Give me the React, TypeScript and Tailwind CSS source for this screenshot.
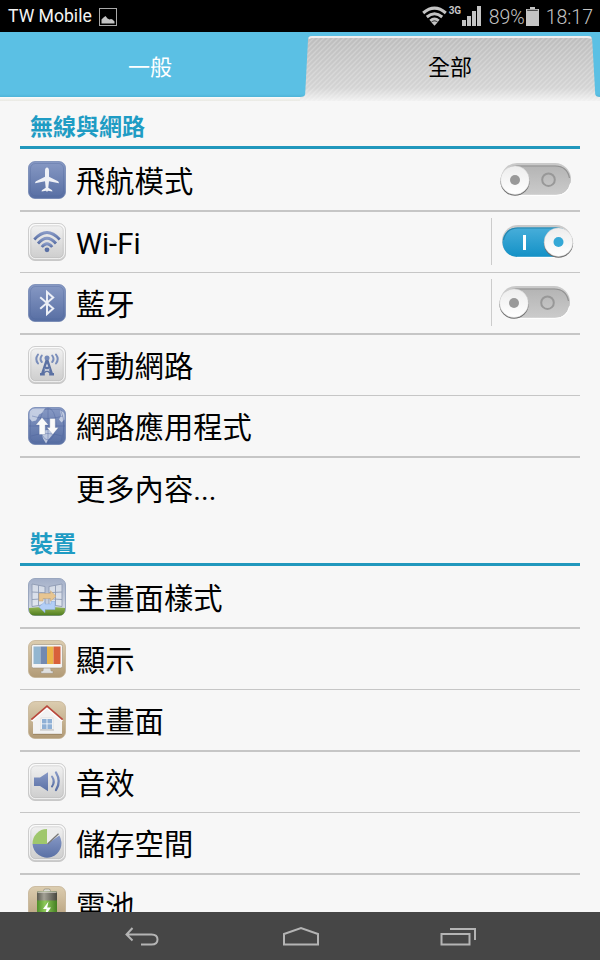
import React, { useState } from 'react';

type SwitchState = 'on' | 'off';

interface SettingItem {
  id: string;
  label: string;
  icon?: React.ReactNode;
  toggle?: boolean;
  divided?: boolean;
}

interface TileProps {
  tone: 'blue' | 'silver' | 'tan';
  children: React.ReactNode;
}

const fontStack = "font-['Roboto','Noto_Sans_CJK_TC',sans-serif]";

// Shared gradients, referenced by every icon below
const Gradients = () => (
  <svg width="0" height="0" className="absolute" aria-hidden="true">
    <defs>
      <linearGradient id="tile-blue" x1="0" y1="0" x2="0" y2="1">
        <stop offset="0" stopColor="#8799c4" />
        <stop offset="1" stopColor="#576ea3" />
      </linearGradient>
      <linearGradient id="tile-silver" x1="0" y1="0" x2="0" y2="1">
        <stop offset="0" stopColor="#f3f3f3" />
        <stop offset="1" stopColor="#cbcbcb" />
      </linearGradient>
      <linearGradient id="tile-tan" x1="0" y1="0" x2="0" y2="1">
        <stop offset="0" stopColor="#dccdb0" />
        <stop offset="1" stopColor="#b19a76" />
      </linearGradient>
      <linearGradient id="glyph-blue" x1="0" y1="0" x2="0" y2="1">
        <stop offset="0" stopColor="#8698c5" />
        <stop offset="1" stopColor="#5a70a5" />
      </linearGradient>
      <linearGradient id="sky" x1="0" y1="0" x2="0" y2="1">
        <stop offset="0" stopColor="#a3afc8" />
        <stop offset="1" stopColor="#dce1ea" />
      </linearGradient>
      <linearGradient id="grass" x1="0" y1="0" x2="0" y2="1">
        <stop offset="0" stopColor="#94b552" />
        <stop offset="1" stopColor="#4f7d1f" />
      </linearGradient>
      <linearGradient id="cell" x1="0" y1="0" x2="1" y2="0">
        <stop offset="0" stopColor="#4f8f2a" />
        <stop offset="0.4" stopColor="#8fc95a" />
        <stop offset="1" stopColor="#437f22" />
      </linearGradient>
      <linearGradient id="cell-cap" x1="0" y1="0" x2="1" y2="0">
        <stop offset="0" stopColor="#5a594f" />
        <stop offset="0.35" stopColor="#a3a195" />
        <stop offset="1" stopColor="#48473f" />
      </linearGradient>
      <linearGradient id="track-off" x1="0" y1="0" x2="0" y2="1">
        <stop offset="0" stopColor="#b4b4b4" />
        <stop offset="1" stopColor="#cbcbcb" />
      </linearGradient>
      <linearGradient id="track-on" x1="0" y1="0" x2="0" y2="1">
        <stop offset="0" stopColor="#48aeda" />
        <stop offset="1" stopColor="#1391c6" />
      </linearGradient>
      <linearGradient id="knob" x1="0" y1="0" x2="0" y2="1">
        <stop offset="0" stopColor="#ededed" />
        <stop offset="1" stopColor="#ffffff" />
      </linearGradient>
    </defs>
  </svg>
);

const tileFill = {
  blue: 'url(#tile-blue)',
  silver: 'url(#tile-silver)',
  tan: 'url(#tile-tan)',
};

const tileEdge = {
  blue: '#6a7fae',
  silver: '#bdbdbd',
  tan: '#c0ae8e',
};

const Tile = ({ tone, children }: TileProps) => (
  <svg width="38" height="38" viewBox="0 0 38 38" className="block shrink-0">
    <rect x="0.5" y="0.5" width="37" height="37" rx="6.5" fill={tileFill[tone]} stroke={tileEdge[tone]} strokeOpacity="0.7" />
    {tone === 'blue' && (
      <rect x="2.5" y="2.5" width="33" height="32.5" rx="5" fill="none" stroke="#50669a" strokeOpacity="0.45" strokeWidth="0.7" />
    )}
    {tone === 'silver' && (
      <>
        <rect x="1.7" y="1.700" width="34.600" height="33.800" rx="5.5" fill="none" stroke="#fff" strokeOpacity="0.8" />
        <rect x="2.8" y="2.800" width="32.400" height="32" rx="4.8" fill="none" stroke="#a9a9a9" strokeOpacity="0.45" strokeWidth="0.7" />
      </>
    )}
    {children}
  </svg>
);

const AirplaneIcon = () => (
  <Tile tone="blue">
    <path
      d="M19 6.500c-1.400 0-2 1.600-2 3.400v5.800L8 20.200c-.6.400-.9 1-.9 2l9.900-2 .7 6.600-3.500 2.200c-.4.300-.6.800-.6 1.500l4.500-.8.900 1.200.9-1.200 4.500.8c0-.7-.2-1.200-.6-1.500l-3.500-2.200.7-6.600 9.900 2c0-1-.3-1.600-.9-2L21 15.700V9.900c0-1.800-.6-3.400-2-3.400z"
      fill="#eff1f6"
    />
  </Tile>
);

const WifiTileIcon = () => (
  <Tile tone="silver">
    <g fill="none" stroke="url(#glyph-blue)" strokeWidth="2.800">
      <path d="M6.300 16.500Q19 2.500 31.700 16.500" />
      <path d="M10 20.500Q19 10 28 20.500" />
      <path d="M13.800 24Q19 17.500 24.200 24" />
    </g>
    <circle cx="19" cy="26.800" r="2.400" fill="#5a70a5" />
  </Tile>
);

const BluetoothIcon = () => (
  <Tile tone="blue">
    <path d="M12.200 13.200l13 11.300-6.200 5.500V8l6.200 5.500-13 11.300" fill="none" stroke="#eceff6" strokeWidth="2" />
  </Tile>
);

const AntennaIcon = () => (
  <Tile tone="silver">
    <g fill="none" stroke="#7a8ebb" strokeWidth="2" strokeLinecap="round">
      <path d="M13.800 9.500q-2.600 3.500 0 6.500M10 8.500q-3.400 4.500 0 9M24.200 9.500q2.600 3.500 0 6.500M28 8.500q3.400 4.500 0 9" />
    </g>
    <circle cx="19" cy="12" r="2.500" fill="#7489b8" />
    <path d="M17.500 14h3l4.300 13H26v2.500h-4.800V27L19 25.800 16.800 27v2.500H12V27h1.200z" fill="#5b71a3" />
    <path d="M19 17.500l1.300 3.300h-2.600z" fill="#dde0e8" />
    <path d="M16.500 23l5 2M21.500 23l-5 2" stroke="#dde0e8" strokeWidth="0.900" />
  </Tile>
);

const GlobeIcon = () => (
  <Tile tone="blue">
    <path d="M1.500 7q0-5.500 6-5.500H17l-2 4-4 2-3 6-4 1-2.500-3zM32 3.500q4.500 1 4.500 5v4l-3 3-2.500-3 2-4zM14 24l8-1.500 4 3-3 4-2.500 3-2.500 4-3-5-1-4z" fill="#d5dceb" fillOpacity="0.800" />
    <g fill="none" stroke="#4a629b" strokeOpacity="0.500" strokeWidth="0.800">
      <ellipse cx="20" cy="17" rx="8" ry="16" />
      <path d="M1 19h36M20 1v36M4 9q16 5 31 0M3 29q16-5 31 0M33 4q6 14 0 30" />
    </g>
    <path d="M14 10.500l6.500 7.500h-3.300v9.500h-6V18H7.800z" fill="#fafafa" stroke="#4c6090" strokeOpacity="0.500" strokeWidth="0.500" />
    <path d="M24.800 27.500l-6-7h3V11.500h5.500v9h3.200z" fill="#fafafa" stroke="#4c6090" strokeOpacity="0.500" strokeWidth="0.500" />
  </Tile>
);

const HomeStyleIcon = () => (
  <svg width="38" height="38" viewBox="0 0 38 38" className="block shrink-0">
    <rect x="0.5" y="0.5" width="37" height="37" rx="6.5" fill="url(#sky)" stroke="#9aa7bf" />
    <path d="M1 30q18-2 36 0v1.500q0 6-6 6H7q-6 0-6-6z" fill="url(#grass)" />
    <g fill="#eef1f6" fillOpacity="0.600" stroke="#8e9bb3" strokeWidth="0.900">
      <path d="M4 6l13 2.500v18L4 28.500zM34 6L21 8.500v18l13 2z" />
      <path d="M10.500 7.200v20M4 14l13 .7M4 21.500l13-.8M27.500 7.200v20M34 14l-13 .7M34 21.500l-13-.8" />
    </g>
    <path d="M11 15.500h11.500V12.800l5.500 5.400-5.500 5v-2.700H15v2.500h-4z" fill="#e7c591" stroke="#c6a36e" strokeWidth="0.500" />
    <path d="M27 23.500v8H17v3.200l-6.200-5.800 6.200-5.200V26h6v-2.500z" fill="#b3cef6" stroke="#87a9dc" strokeWidth="0.500" />
  </svg>
);

const DisplayIcon = () => (
  <Tile tone="tan">
    <path d="M15.500 27h7l.5 4h2v2.300H13V31h2z" fill="#dfe0e1" stroke="#9a8e78" strokeWidth="0.500" />
    <rect x="3.500" y="4.500" width="31" height="23.500" rx="1.800" fill="#f4f4f4" stroke="#9a8e78" strokeWidth="0.600" />
    <rect x="5.500" y="6.500" width="7" height="17.500" fill="#93b6d0" />
    <rect x="12.500" y="6.500" width="6.500" height="17.500" fill="#7389b0" />
    <rect x="19" y="6.500" width="6.500" height="17.500" fill="#eab448" />
    <rect x="25.500" y="6.500" width="7" height="17.500" fill="#d8603b" />
  </Tile>
);

const HouseIcon = () => (
  <Tile tone="tan">
    <path d="M19 6.500L34 19.500V33H5V19.500z" fill="#f2f2f2" />
    <path d="M5 33.300h29" stroke="#907b5a" strokeWidth="0.800" />
    <path d="M3.500 19.800L19 6.300l15.500 13.500" fill="none" stroke="#fff" strokeWidth="2.200" />
    <path d="M3.300 18.600L19 5l15.700 13.600" fill="none" stroke="#b9483c" strokeWidth="1.700" />
    <rect x="13" y="17" width="12" height="11.500" fill="#fff" stroke="#d2d2d2" strokeWidth="0.600" />
    <path d="M14 18h4.600v4.500H14zM19.400 18H24v4.500h-4.600zM14 23.300h4.600V28H14zM19.400 23.300H24V28h-4.600z" fill="#8fb0d5" />
    <path d="M12 29h14" stroke="#bdbdbd" />
  </Tile>
);

const SoundIcon = () => (
  <Tile tone="silver">
    <path d="M6 14.500h6l8-5.200v19l-8-5.300H6z" fill="url(#glyph-blue)" />
    <g fill="none" stroke="url(#glyph-blue)" strokeLinecap="round">
      <path d="M24 13.500q3.500 5 0 10" strokeWidth="2.100" />
      <path d="M28 9.500q5.500 9 0 17.500" strokeWidth="2.300" />
    </g>
  </Tile>
);

const StorageIcon = () => (
  <Tile tone="silver">
    <path d="M19 20L31.300 11.500A14.500 14.500 0 1 1 4.500 20z" fill="url(#glyph-blue)" />
    <path d="M19 20V5A14.500 14.500 0 0 0 4.500 20z" fill="#9fc76c" />
    <path d="M19 20V5.500q7 0 11.500 4z" fill="#ececec" />
    <path d="M19.500 20L30.500 9.800" stroke="#777" strokeWidth="1.300" />
  </Tile>
);

const BatteryTileIcon = () => (
  <Tile tone="tan">
    <rect x="15.500" y="3" width="7" height="4" rx="1.800" fill="#dddcd6" stroke="#85806f" strokeWidth="0.600" />
    <rect x="9" y="5.500" width="20" height="31" rx="1" fill="url(#cell)" />
    <rect x="9" y="5.500" width="20" height="9" rx="1" fill="url(#cell-cap)" />
    <path d="M9.500 6.200h19" stroke="#d8d6cb" />
    <path d="M20.500 15.500l-5.500 7.500h3.500l-1.500 7 6-8.500h-3.800z" fill="#fff" />
  </Tile>
);

const sections: { title: string; items: SettingItem[] }[] = [
  {
    title: '無線與網路',
    items: [
      { id: 'airplane', label: '飛航模式', icon: <AirplaneIcon />, toggle: true },
      { id: 'wifi', label: 'Wi-Fi', icon: <WifiTileIcon />, toggle: true, divided: true },
      { id: 'bluetooth', label: '藍牙', icon: <BluetoothIcon />, toggle: true, divided: true },
      { id: 'mobile', label: '行動網路', icon: <AntennaIcon /> },
      { id: 'netapps', label: '網路應用程式', icon: <GlobeIcon /> },
      { id: 'more', label: '更多內容...' },
    ],
  },
  {
    title: '裝置',
    items: [
      { id: 'homestyle', label: '主畫面樣式', icon: <HomeStyleIcon /> },
      { id: 'display', label: '顯示', icon: <DisplayIcon /> },
      { id: 'home', label: '主畫面', icon: <HouseIcon /> },
      { id: 'sound', label: '音效', icon: <SoundIcon /> },
      { id: 'storage', label: '儲存空間', icon: <StorageIcon /> },
      { id: 'battery', label: '電池', icon: <BatteryTileIcon /> },
    ],
  },
];

const StatusBar = () => (
  <header className="flex h-8 shrink-0 items-center justify-between bg-black pl-2 pr-[7px] text-[#c4c4c4]">
    <div className="flex items-center gap-[7px] pt-[2px]">
      <span className="text-[17.6px] leading-none text-[#f4f4f4]">TW Mobile</span>
      <svg width="18" height="18" viewBox="0 0 18 18" className="-mt-px">
        <rect x="0.500" y="0.500" width="17" height="17" fill="none" stroke="#a9a9a9" />
        <path d="M2.500 15.500v-4l2-2 2-1.500 2 2.500 2 1 1.500-.5 1.500.5 2 2v2z" fill="#c4c4c4" />
      </svg>
    </div>
    <div className="flex items-center">
      <svg width="25" height="20" viewBox="0 0 25 20">
        <g fill="none" stroke="#c4c4c4" strokeWidth="3">
          <path d="M1.200 7Q12.500-2.800 23.800 7" />
          <path d="M4.800 11Q12.500 4.500 20.200 11" />
          <path d="M8.300 14.800Q12.500 11.300 16.700 14.800" />
        </g>
        <path d="M9.300 16.300q3.200-2 6.400 0l-3.200 3.400z" fill="#c4c4c4" />
      </svg>
      <span className="ml-[2px] w-[13px] -translate-y-[5px] text-[10px] font-bold leading-none">3G</span>
      <svg width="19" height="20" viewBox="0 0 19 20" fill="#c4c4c4">
        <path d="M0 14h4v6H0zM5 10h4v10H5zM10 5h4v15h-4zM15 0h4v20h-4z" />
      </svg>
      <span className="ml-2 w-[36px] whitespace-nowrap pt-[3px] text-[19.500px] font-light leading-none">89%</span>
      <svg width="13" height="19" viewBox="0 0 13 19" fill="#c4c4c4" className="ml-px">
        <path d="M4 0h5v2h4v17H0V2h4z" />
        <path d="M1.200 3.300h10.600" stroke="#333" strokeWidth="1" />
      </svg>
      <span className="ml-[7px] pt-[3px] text-[19.500px] font-light leading-none">18:17</span>
    </div>
  </header>
);

const TabBar = () => (
  <nav className="flex h-[69px] shrink-0 bg-[linear-gradient(to_bottom,#5bc0e4_0px,#5bc0e4_62px,#4fb4d8_65px,#fbfbfb_65px,#e9e9e3_69px)]">
    <button className="h-[69px] w-[300px] text-[22px] leading-[71px] text-white">一般</button>
    <button className="relative h-[69px] w-[300px] text-[22px] leading-[71px] text-black">
      <svg width="300" height="69" viewBox="0 0 300 69" className="absolute inset-0">
        <defs>
          <linearGradient id="tab-fill" x1="0" y1="0" x2="0" y2="1">
            <stop offset="0" stopColor="#bdbdbd" />
            <stop offset="0.800" stopColor="#d4d4d4" />
            <stop offset="1" stopColor="#f1f1f1" />
          </linearGradient>
          <pattern id="hatch" width="5" height="5" patternUnits="userSpaceOnUse">
            <path d="M-1 1L1-1M0 5L5 0M4 6L6 4" stroke="#fff" strokeOpacity="0.220" strokeWidth="1.300" />
          </pattern>
        </defs>
        <path d="M0 65q5 0 5.200-3L8 8q.2-4 4-4h276q4 0 4.200 4l3 54q.3 3 4.800 3v4H0z" fill="url(#tab-fill)" />
        <path d="M0 65q5 0 5.200-3L8 8q.2-4 4-4h276q4 0 4.200 4l3 54q.3 3 4.800 3v4H0z" fill="url(#hatch)" />
        <path d="M9 6.500q.8-1.500 3-1.500h276q2.500 0 3 1.500" fill="none" stroke="#efefef" strokeWidth="2" />
      </svg>
      <span className="relative">全部</span>
    </button>
  </nav>
);

const Toggle = ({ state, onClick, label }: { state: SwitchState; onClick: () => void; label: string }) => {
  const on = state === 'on';
  return (
    <button type="button" role="switch" aria-checked={on} aria-label={label} onClick={onClick} className="-mt-[2px]">
      <svg width="76" height="36" viewBox="0 0 76 36" className="block">
        <rect x="2" y="2" width="70" height="32" rx="16" fill="#c9c9c9" />
        <rect x="2.500" y="4.500" width="69" height="29.500" rx="14.700" fill={on ? 'url(#track-on)' : 'url(#track-off)'} />
        <path d="M3.500 17Q6 5 18 5h38q12 0 14.500 12" fill="none" stroke={on ? '#2585ad' : '#929292'} strokeWidth="1.200" />
        <path d="M17 34.300h40q12 0 14.500-12" fill="none" stroke="#fff" strokeWidth="1" />
        {on ? (
          <>
            <rect x="23" y="12" width="3" height="15" fill="#fff" />
            <circle cx="58.500" cy="20.200" r="14.600" fill="#6b6b6b" />
            <circle cx="58.500" cy="19.200" r="14.300" fill="url(#knob)" stroke="#d8d8d8" strokeWidth="0.500" />
            <circle cx="58.500" cy="19" r="5" fill="#35a8d6" />
          </>
        ) : (
          <>
            <circle cx="49.500" cy="18.700" r="6.300" fill="none" stroke="#989898" strokeWidth="2" />
            <circle cx="16" cy="20.200" r="14.600" fill="#6b6b6b" />
            <circle cx="16" cy="19.200" r="14.300" fill="url(#knob)" stroke="#d8d8d8" strokeWidth="0.500" />
            <circle cx="16" cy="19" r="5" fill="#999" />
          </>
        )}
      </svg>
    </button>
  );
};

// Row heights alternate because the separators alternate between 1px and 2px
const rowSize = [
  'h-[63px] border-b-2 pt-[12px]',
  'h-[61px] border-b pt-[11px]',
  'h-[62px] border-b-2 pt-[11px]',
  'h-[61px] border-b pt-[11px]',
  'h-[62px] border-b-2 pt-[11px]',
  'h-[61px] pt-[11px]',
];

const App: React.FC = () => {
  const [switches, setSwitches] = useState<Record<string, SwitchState>>({
    airplane: 'off',
    wifi: 'on',
    bluetooth: 'off',
  });

  const handleToggle = (id: string) => {
    setSwitches({ ...switches, [id]: switches[id] === 'on' ? 'off' : 'on' });
  };

  return (
    <div className={`flex h-[960px] w-[600px] flex-col overflow-hidden bg-[#f7f7f7] ${fontStack}`}>
      <Gradients />
      <StatusBar />
      <TabBar />

      <main className="min-h-0 flex-1 overflow-hidden px-5 pt-px">
        {sections.map(section => (
          <section key={section.title}>
            <h2 className="h-[47px] border-b-3 border-[#2198bd] pl-[10px] text-[23px] font-bold leading-[51px] text-[#1f9cc4]">
              {section.title}
            </h2>
            {section.items.map((item, index) => (
              <div key={item.id} className={`flex items-start border-[#c6c6c6] pl-2 ${rowSize[index]}`}>
                <div className="h-[38px] w-[38px] shrink-0">{item.icon}</div>
                <span className="ml-[10px] flex-1 whitespace-nowrap pt-[2px] text-[29.3px] leading-[38px] text-black">{item.label}</span>
                {item.toggle && (
                  <div className={`flex items-center ${item.divided ? '-mt-[5px] h-[47px] border-l border-[#cccccc]' : 'h-[38px]'} ${item.id === 'wifi' ? 'pl-2 pr-[4px]' : item.divided ? 'pl-[6px] pr-[6px]' : 'pr-[5px]'}`}>
                    <Toggle state={switches[item.id]} onClick={() => handleToggle(item.id)} label={item.label} />
                  </div>
                )}
              </div>
            ))}
          </section>
        ))}
      </main>

      <footer className="flex h-12 shrink-0 items-center justify-center gap-[121px] bg-[#464646]">
        <svg width="38" height="22" viewBox="0 0 38 22" fill="none" stroke="#b4b4b4" strokeWidth="2" className="translate-x-[2px] translate-y-px">
          <path d="M8.500 2L2.500 8.500l6 6M3 8.500h24.500q6 0 6 5t-6 5H17" />
        </svg>
        <svg width="38" height="22" viewBox="0 0 38 22" fill="none" stroke="#b4b4b4" strokeWidth="2" className="translate-x-px">
          <path d="M2 19.500V9L19 3l17 6v10.500z" />
        </svg>
        <svg width="38" height="22" viewBox="0 0 38 22" fill="none" stroke="#b4b4b4" strokeWidth="2">
          <path d="M1.500 9h28v10.500h-28zM10 4h25v11" />
        </svg>
      </footer>
    </div>
  );
};

export default App;
